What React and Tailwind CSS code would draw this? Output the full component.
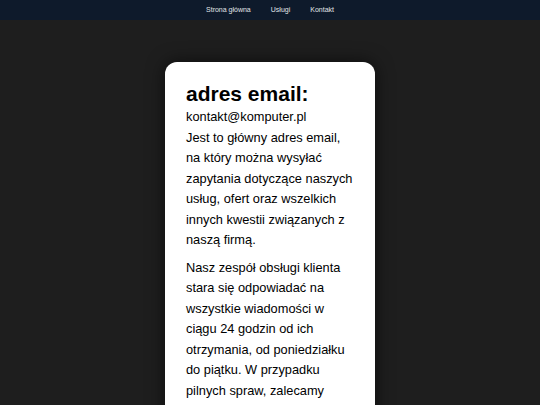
export default function App() {
  const links = ['Strona główna', 'Usługi', 'Kontakt']

  return (
    <div className="min-h-screen bg-[#1e1e1e] font-['Liberation_Sans',Arial,sans-serif]">
      {/* Nav */}
      <nav className="h-5 bg-[#0e1a2b] flex items-center justify-center gap-5">
        {links.map(l => (
          <a key={l} href="#" className="text-[7px] text-[#e2e4e8]">
            {l}
          </a>
        ))}
      </nav>

      {/* Card */}
      <div className="flex justify-center pt-[42px]">
        <div className="w-[210px] bg-white rounded-xl px-[21px] pt-5 pb-6 shadow-[0_0_18px_rgba(0,0,0,0.6)] text-black">
          <h2 className="text-[21px] font-bold leading-[24px]">adres email:</h2>
          <p className="text-[12.8px] leading-[20.5px] mt-[1px]">kontakt@komputer.pl</p>
          <p className="text-[12.8px] leading-[20.5px]">
            Jest to główny adres email, na który można wysyłać zapytania dotyczące naszych usług, ofert oraz wszelkich innych kwestii związanych z naszą firmą.
          </p>
          <p className="text-[12.8px] leading-[20.5px] mt-[7px]">
            Nasz zespół obsługi klienta stara się odpowiadać na wszystkie wiadomości w ciągu 24 godzin od ich otrzymania, od poniedziałku do piątku. W przypadku pilnych spraw, zalecamy kontakt telefoniczny.
          </p>
        </div>
      </div>
    </div>
  )
}
